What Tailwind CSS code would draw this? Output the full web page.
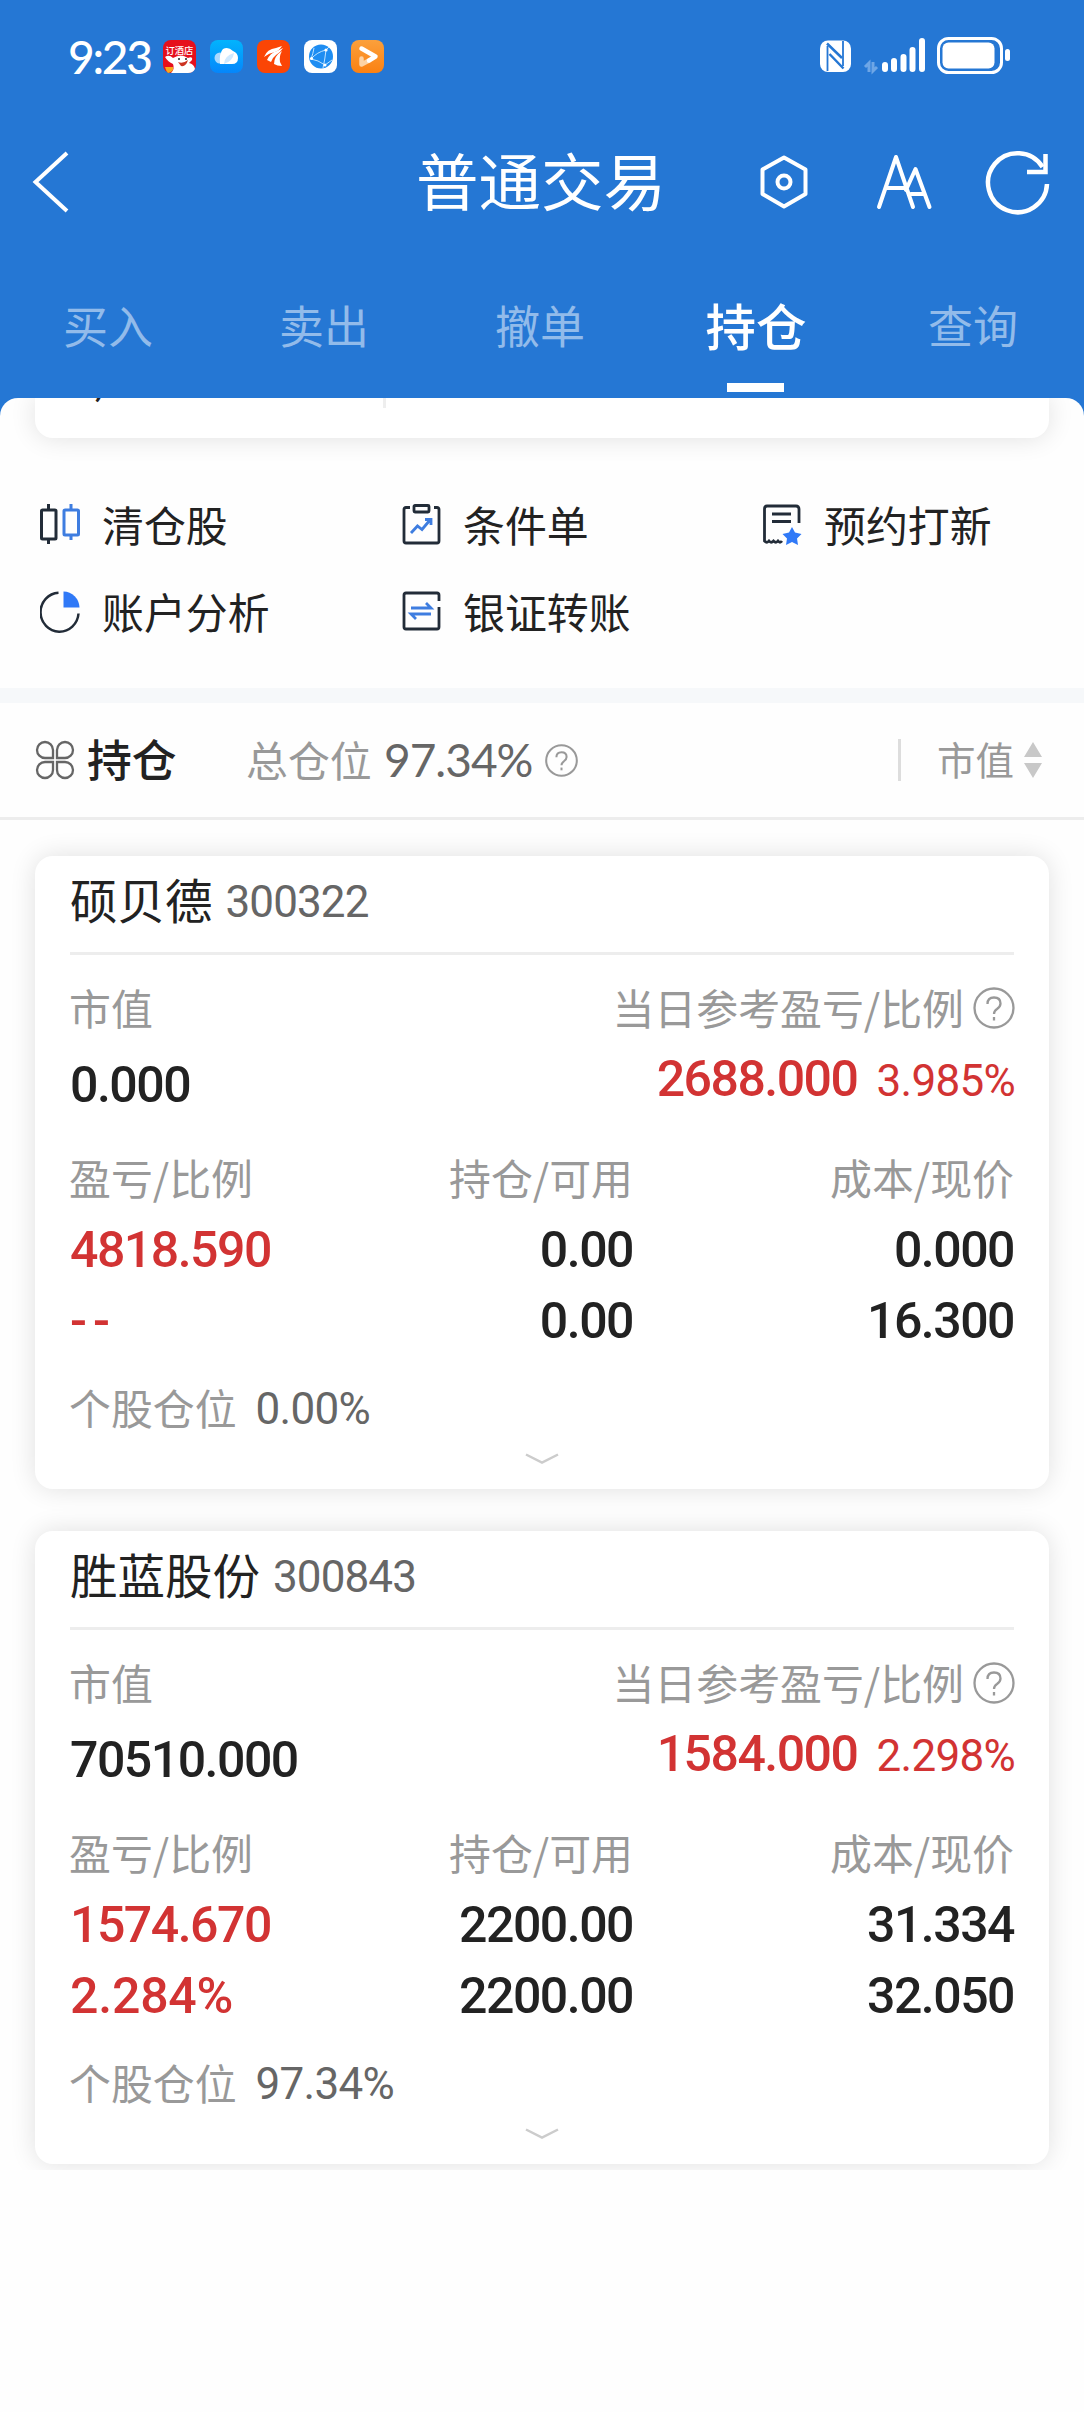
<!DOCTYPE html>
<html lang="zh-CN">
<head>
    <meta charset="UTF-8">
    <meta name="viewport" content="width=device-width, initial-scale=1.0">
    <title>普通交易</title>
    <script src="https://cdn.jsdelivr.net/npm/@tailwindcss/browser@4"></script>
</head>
<body class="bg-[#fefefe] w-[1084px] h-[2412px] overflow-hidden font-['Noto_Sans_CJK_SC',sans-serif] text-[#222]">
    <!-- Header -->
    <header class="bg-[#2577d4] text-white h-[398px]">
        <!-- Status bar -->
        <div class="h-28 flex items-center pl-[68px] pr-[74px]">
            <span class="w-[95px] font-[Lato,sans-serif] text-[46px] leading-none tracking-[-2.200px] font-medium pt-[2px]">9:23</span>
            <div class="flex gap-[14px]">
                <svg width="33" height="33" viewBox="0 0 33 33">
                    <rect width="33" height="33" rx="8" fill="#e60f1c"/>
                    <path d="M2 17 Q6 14 10 18 Q18 13 25 18 Q30 16 29 20 L26 23 Q31 24 32 29 Q30 33 25 33 H8 Q12 29 10 24 Q5 22 2 17Z" fill="#fff"/>
                    <path d="M15 22 Q20 24 25 20 Q23 27 18 26Z" fill="#c32"/>
                    <circle cx="16" cy="19" r="1" fill="#222"/><circle cx="23" cy="19" r="1" fill="#222"/>
                    <path d="M2 27h8v3q-2 3-5 3q-2-2-3-6Z" fill="#f6a81c"/>
                    <text x="2.500" y="14" font-size="9.300" font-weight="500" fill="#fff" font-family="Noto Sans CJK SC">订酒店</text>
                </svg>
                <svg width="33" height="33" viewBox="0 0 33 33">
                    <defs><linearGradient id="cloud" x2="0" y2="1"><stop stop-color="#02b4fd"/><stop offset="1" stop-color="#0586fb"/></linearGradient></defs>
                    <rect width="33" height="33" rx="8" fill="url(#cloud)"/>
                    <circle cx="10" cy="18" r="5.500" fill="#a9d9ff"/>
                    <path d="M10 24 Q9 13 13 9 Q18 6 23 11 Q28 13 28 18 Q28 24 22 24Z" fill="#fff"/>
                    <path d="M14 24 Q14 16 24 13 Q23 21 14 24Z" fill="#cfe9ff"/>
                </svg>
                <svg width="33" height="33" viewBox="0 0 33 33">
                    <rect width="33" height="33" rx="8" fill="#fb4505"/>
                    <g fill="#fff"><path d="M7 17 Q10 9 19 8 L25 6 Q22 11 18 12 Q12 13 7 17Z"/><path d="M10 20 Q13 13 20 11 L26 8 Q23 13 19 15 Q16 17 14 22Z"/><path d="M17 24 Q17 16 25 11 Q22 16 23 22 L25 26 Q20 26 17 24Z"/></g>
                </svg>
                <svg width="33" height="33" viewBox="0 0 33 33">
                    <rect width="33" height="33" rx="8" fill="#fff"/>
                    <circle cx="17" cy="16.500" r="12" fill="#1e8df2"/>
                    <g fill="none" stroke="#bfe3ff" stroke-width="1"><path d="M7 19 Q13 12 22 10 Q21 19 19 28M7 19 Q14 20 21 25M10 8 Q9 14 7 19M22 10 L25 7M21 25 L28 20"/></g>
                    <g fill="#fff"><circle cx="7.500" cy="18.500" r="1.600"/><circle cx="22" cy="10" r="1.600"/><circle cx="21" cy="25" r="1.500"/></g>
                </svg>
                <svg width="33" height="33" viewBox="0 0 33 33">
                    <defs><linearGradient id="play" x2="0" y2="1"><stop stop-color="#fba03c"/><stop offset="1" stop-color="#fb8112"/></linearGradient></defs>
                    <rect width="33" height="33" rx="8" fill="url(#play)"/>
                    <path d="M10.500 18.500 V24.500 L18 20.500" fill="none" stroke="#fcd3a6" stroke-width="4.500" stroke-linejoin="round" stroke-linecap="round"/>
                    <path d="M10.500 8.500 L24.500 16.500 L18 20.500" fill="none" stroke="#fff" stroke-width="4.500" stroke-linejoin="round" stroke-linecap="round"/>
                </svg>
            </div>
            <div class="ml-auto flex items-center">
                <!-- nfc, signal, battery -->
                <svg width="190" height="40" viewBox="820 36 190 40">
                    <rect x="820" y="40.500" width="31" height="31.500" rx="8" fill="#fff"/>
                    <path d="M827.500 46 V71M843 41 V66" stroke="#2577d4" stroke-width="1.800"/>
                    <path d="M827 43.500 L842 58M829.500 54 L843.500 68.500" stroke="#2577d4" stroke-width="2.500"/>
                    <path d="M869 72 V63 L865 67M873 62 V71 L877 67" fill="none" stroke="#6ea6e6" stroke-width="3"/>
                    <g stroke="#fff" stroke-width="6" stroke-linecap="round"><path d="M885 65V69M894 61V69M903.500 57V69M912.500 50V69M922 41V69"/></g>
                    <rect x="938.500" y="38.500" width="63" height="34" rx="10" fill="none" stroke="#fff" stroke-width="3"/>
                    <rect x="942.500" y="42.500" width="52" height="26" rx="6" fill="#fff"/>
                    <rect x="1005" y="49" width="5" height="12" rx="2.500" fill="#fff"/>
                </svg>
            </div>
        </div>
        <!-- Title bar -->
        <div class="h-[140px] flex items-center pl-[31px] pr-[34px]">
            <svg width="38" height="64" viewBox="0 0 38 64"><path d="M36 3 L4.500 32 L36 61" fill="none" stroke="#fff" stroke-width="4"/></svg>
            <h1 class="ml-[347px] w-[340px] text-[62.500px] leading-none whitespace-nowrap pb-[6px]">普通交易</h1>
            <svg width="294" height="70" viewBox="756 147 294 70" fill="none" stroke="#fff" stroke-width="4" stroke-linecap="round" stroke-linejoin="round">
                <path d="M784 157.500 L805.500 169.500 V194 L784 206.500 L762.500 194 V169.500Z"/>
                <circle cx="784" cy="182" r="6.500"/>
                <path d="M879 207 L896 157 L913 207M887 188 H907M906 190 L915.500 169 L929.500 207M911 194 H924"/>
                <path d="M1047 184 A29.500 29.500 0 1 1 1042.500 167" stroke-width="4.500" stroke-linecap="butt"/>
                <path d="M1045.500 154 V172 H1027" stroke-width="4.500" stroke-linecap="butt" stroke-linejoin="miter"/>
            </svg>
        </div>
        <!-- Tabs -->
        <nav class="h-[146px] w-[1080px] grid grid-cols-5 text-center text-[45px] leading-[145px] text-[#92bbea]">
            <a>买入</a>
            <a>卖出</a>
            <a>撤单</a>
            <a class="relative h-[146px] text-[50.500px] leading-[144px] font-medium text-white">持仓<span class="absolute left-[79px] bottom-[6px] w-[57px] h-[9px] bg-white"></span></a>
            <a class="pl-[2px]">查询</a>
        </nav>
    </header>

    <main class="bg-[#2577d4]">
        <div class="bg-[#fefefe] rounded-t-[18px] overflow-hidden">
            <!-- Scrolled account card -->
            <div class="mx-[35px] h-10 rounded-b-[18px] bg-white shadow-[0_0_26px_rgba(0,0,0,0.12)] flex">
                <div class="w-[351px] h-[10px] overflow-hidden border-r-3 border-[#eee] font-[Roboto,sans-serif] text-[40px] leading-[40px]">
                    <span class="block -mt-[35px] pl-[60px]">,</span>
                </div>
            </div>

            <!-- Shortcuts -->
            <div class="h-[250px] pt-[43px] pl-[40px] grid grid-cols-[361px_361px_1fr] auto-rows-[87px] text-[41.900px] leading-none">
                <a class="flex items-center gap-[22px]">
                    <svg width="40" height="42" viewBox="0 0 40 42" fill="none" stroke-width="3">
                        <path d="M8.500 0V6M8.500 35V40" stroke="#222c38"/><rect x="1.500" y="6" width="14.500" height="29" rx="1" stroke="#222c38"/>
                        <path d="M31 0V6M31 31V36" stroke="#3e7de0"/><rect x="24" y="6" width="14.500" height="25" rx="1" stroke="#3e7de0"/>
                    </svg>
                    <span class="pb-[2px]">清仓股</span>
                </a>
                <a class="flex items-center gap-[22px]">
                    <svg width="40" height="42" viewBox="0 1 40 42" fill="none" stroke-width="2.800">
                        <path d="M9 4.500H5Q3 4.500 3 6.500V38Q3 40 5 40H36Q38 40 38 38V6.500Q38 4.500 36 4.500H33" stroke="#222c38"/>
                        <rect x="13" y="2.500" width="15" height="6.500" rx="1" stroke="#222c38"/>
                        <path d="M10 30L16.500 23L21 26.500L29 17M24 16.500H30V22" stroke="#3e7de0"/>
                    </svg>
                    <span class="pb-[2px]">条件单</span>
                </a>
                <a class="flex items-center gap-[22px]">
                    <svg width="40" height="42" viewBox="0 1 40 42" fill="none" stroke-width="2.800">
                        <path d="M37 20V6Q37 3 34 3H5Q2.500 3 2.500 6V38Q5 40.500 7 38Q9 40.500 11.500 38Q14 40.500 16 38Q18 40.500 20 38" stroke="#222c38"/>
                        <path d="M10 11H29M10 18.500H29" stroke="#222c38"/>
                        <path d="M30 24L33 29.500L39.500 31L35 35.500L36 42L30 39L24 42L25 35.500L20.500 31L27 29.500Z" fill="#3079f7"/>
                    </svg>
                    <span class="pb-[2px]">预约打新</span>
                </a>
                <a class="flex items-center gap-[22px]">
                    <svg width="40" height="42" viewBox="0 1 40 42" fill="none" stroke-width="2.500">
                        <path d="M18.500 2.700A19 19.500 0 1 0 38.500 23.500" stroke="#222c38"/>
                        <path d="M23.500 1.500A16.500 16.500 0 0 1 39.500 17.500H23.500Z" fill="#3079f7"/>
                    </svg>
                    <span class="pb-[2px]">账户分析</span>
                </a>
                <a class="flex items-center gap-[22px]">
                    <svg width="40" height="42" viewBox="0 1 40 42" fill="none" stroke-width="2.800">
                        <path d="M38 11V5Q38 3 36 3H5Q3 3 3 5V37Q3 39 5 39H36Q38 39 38 37V17" stroke="#222c38"/>
                        <path d="M10 18H30L25 13M30 24H10L15 29" stroke="#3e7de0"/>
                    </svg>
                    <span class="pb-[2px]">银证转账</span>
                </a>
            </div>

            <div class="h-[15px] bg-[#f6f8fa]"></div>

            <!-- Position summary -->
            <div class="h-[117px] border-b-3 border-[#ededed] flex items-center pl-[35px] pr-[42px] leading-none">
                <svg width="41" height="41" viewBox="0 0 41 41" fill="none" stroke="#666" stroke-width="2.300">
                    <path d="M18 18H10A8 8 0 1 1 18 10Z"/>
                    <path d="M22 18H30A8 8 0 1 0 22 10Z"/>
                    <path d="M18 22H10A8 8 0 1 0 18 30Z"/>
                    <path d="M22 22H30A8 8 0 1 1 22 30Z"/>
                </svg>
                <span class="ml-[11px] w-[159px] text-[44.800px] font-medium pb-1">持仓</span>
                <span class="w-[138px] text-[41.900px] text-[#999] pb-[3px]">总仓位</span>
                <span class="w-[161px] font-[Lato,sans-serif] text-[46px] tracking-[-1px] text-[#666]">97.34%</span>
                <svg width="33" height="33" viewBox="0 0 42 42" fill="none" stroke="#999" stroke-width="2.600"><circle cx="21" cy="21" r="19.500"/><path d="M14.500 17Q14.500 10.500 21 10.500Q27.500 10.500 27.500 16.500Q27.500 19.500 24 22Q21 24 21 27"/><path d="M21 30V33.500"/></svg>
                <div class="ml-auto w-[3px] h-[42px] bg-[#ddd]"></div>
                <span class="ml-[36px] w-[87px] text-[38.500px] text-[#999] pb-1">市值</span>
                <svg width="18" height="36" viewBox="0 0 18 36" fill="#c8c8c8"><path d="M9 0L18 15H0ZM9 36L0 21H18Z"/></svg>
            </div>

            <!-- Positions -->
            <section class="pt-9 pb-[6px] px-[35px] space-y-[42px] overflow-hidden">
                <div class="h-[633px] px-[35px] rounded-[18px] bg-white shadow-[0_0_26px_rgba(0,0,0,0.12)] text-[41.900px] leading-none">
                    <div class="h-[99px] border-b-3 border-[#ededed] flex items-center gap-[13px]">
                        <h2 class="text-[47.500px] pb-[11px]">硕贝德</h2>
                        <span class="font-[Roboto,sans-serif] text-[44px] tracking-[-0.900px] text-[#666] pb-[4px]">300322</span>
                    </div>
                    <div class="pt-[23px] -mr-px flex justify-between text-[#999]">
                        <div>
                            <div class="h-[60px] flex items-center pb-[3px] -ml-px">市值</div>
                            <div class="h-[94px] flex items-center font-[Roboto,sans-serif] text-[50px] tracking-[-1.500px] font-medium text-[#222]">0.000</div>
                        </div>
                        <div>
                            <div class="h-[60px] flex items-center justify-end gap-[9px]">
                                <span class="pb-[3px]">当日参考盈亏/比例</span>
                                <svg width="42" height="42" viewBox="0 0 42 42" fill="none" stroke="#999" stroke-width="2.300"><circle cx="21" cy="21" r="19.500"/><path d="M14.500 17Q14.500 10.500 21 10.500Q27.500 10.500 27.500 16.500Q27.500 19.500 24 22Q21 24 21 27"/><path d="M21 30V33.500"/></svg>
                            </div>
                            <div class="h-[82px] flex items-center justify-end gap-[19px] font-[Roboto,sans-serif] text-[#d23333]">
                                <span class="text-[50px] tracking-[-1.500px] font-medium">2688.000</span>
                                <span class="text-[44px] tracking-[-0.700px] pt-1">3.985%</span>
                            </div>
                        </div>
                    </div>
                    <div class="grid grid-cols-[282px_281px_1fr] text-right items-center font-[Roboto,'Noto_Sans_CJK_SC',sans-serif] text-[50px] tracking-[-1.500px] font-medium">
                        <div class="h-[94px] leading-[90px] text-left text-[41.900px] tracking-normal font-normal font-['Noto_Sans_CJK_SC',sans-serif] text-[#999] -ml-px">盈亏/比例</div>
                        <div class="h-[94px] leading-[90px] text-[41.900px] tracking-normal font-normal font-['Noto_Sans_CJK_SC',sans-serif] text-[#999]">持仓/可用</div>
                        <div class="h-[94px] leading-[90px] text-[41.900px] tracking-normal font-normal font-['Noto_Sans_CJK_SC',sans-serif] text-[#999]">成本/现价</div>
                        <div class="h-12 leading-[48px] text-left text-[#d23333]">4818.590</div>
                        <div class="h-12 leading-[48px]">0.00</div>
                        <div class="h-12 leading-[48px]">0.000</div>
                        <div class="h-[94px] leading-[94px] text-left text-[#d23333] tracking-[6px]">--</div>
                        <div class="h-[94px] leading-[94px]">0.00</div>
                        <div class="h-[94px] leading-[94px]">16.300</div>
                    </div>
                    <div class="h-[82px] flex items-center gap-[19px] text-[#999]">
                        <span class="pb-1 -ml-px">个股仓位</span>
                        <span class="font-[Roboto,sans-serif] text-[44px] tracking-[-0.700px] text-[#666]">0.00%</span>
                    </div>
                    <svg class="mx-auto mt-[3px]" width="34" height="12" viewBox="0 0 34 12"><path d="M1 1.500L17 9.500L33 1.500" fill="none" stroke="#ccc" stroke-width="2.500"/></svg>
                </div>

                <div class="h-[633px] px-[35px] rounded-[18px] bg-white shadow-[0_0_26px_rgba(0,0,0,0.12)] text-[41.900px] leading-none">
                    <div class="h-[99px] border-b-3 border-[#ededed] flex items-center gap-[13px]">
                        <h2 class="text-[47.500px] pb-[11px]">胜蓝股份</h2>
                        <span class="font-[Roboto,sans-serif] text-[44px] tracking-[-0.900px] text-[#666] pb-[4px]">300843</span>
                    </div>
                    <div class="pt-[23px] -mr-px flex justify-between text-[#999]">
                        <div>
                            <div class="h-[60px] flex items-center pb-[3px] -ml-px">市值</div>
                            <div class="h-[94px] flex items-center font-[Roboto,sans-serif] text-[50px] tracking-[-1.500px] font-medium text-[#222]">70510.000</div>
                        </div>
                        <div>
                            <div class="h-[60px] flex items-center justify-end gap-[9px]">
                                <span class="pb-[3px]">当日参考盈亏/比例</span>
                                <svg width="42" height="42" viewBox="0 0 42 42" fill="none" stroke="#999" stroke-width="2.300"><circle cx="21" cy="21" r="19.500"/><path d="M14.500 17Q14.500 10.500 21 10.500Q27.500 10.500 27.500 16.500Q27.500 19.500 24 22Q21 24 21 27"/><path d="M21 30V33.500"/></svg>
                            </div>
                            <div class="h-[82px] flex items-center justify-end gap-[19px] font-[Roboto,sans-serif] text-[#d23333]">
                                <span class="text-[50px] tracking-[-1.500px] font-medium">1584.000</span>
                                <span class="text-[44px] tracking-[-0.700px] pt-1">2.298%</span>
                            </div>
                        </div>
                    </div>
                    <div class="grid grid-cols-[282px_281px_1fr] text-right items-center font-[Roboto,'Noto_Sans_CJK_SC',sans-serif] text-[50px] tracking-[-1.500px] font-medium">
                        <div class="h-[94px] leading-[90px] text-left text-[41.900px] tracking-normal font-normal font-['Noto_Sans_CJK_SC',sans-serif] text-[#999] -ml-px">盈亏/比例</div>
                        <div class="h-[94px] leading-[90px] text-[41.900px] tracking-normal font-normal font-['Noto_Sans_CJK_SC',sans-serif] text-[#999]">持仓/可用</div>
                        <div class="h-[94px] leading-[90px] text-[41.900px] tracking-normal font-normal font-['Noto_Sans_CJK_SC',sans-serif] text-[#999]">成本/现价</div>
                        <div class="h-12 leading-[48px] text-left text-[#d23333]">1574.670</div>
                        <div class="h-12 leading-[48px]">2200.00</div>
                        <div class="h-12 leading-[48px]">31.334</div>
                        <div class="h-[94px] leading-[94px] text-left text-[#d23333] tracking-[-0.200px]">2.284%</div>
                        <div class="h-[94px] leading-[94px]">2200.00</div>
                        <div class="h-[94px] leading-[94px]">32.050</div>
                    </div>
                    <div class="h-[82px] flex items-center gap-[19px] text-[#999]">
                        <span class="pb-1 -ml-px">个股仓位</span>
                        <span class="font-[Roboto,sans-serif] text-[44px] tracking-[-0.700px] text-[#666]">97.34%</span>
                    </div>
                    <svg class="mx-auto mt-[3px]" width="34" height="12" viewBox="0 0 34 12"><path d="M1 1.500L17 9.500L33 1.500" fill="none" stroke="#ccc" stroke-width="2.500"/></svg>
                </div>
            </section>
        </div>
    </main>
</body>
</html>
